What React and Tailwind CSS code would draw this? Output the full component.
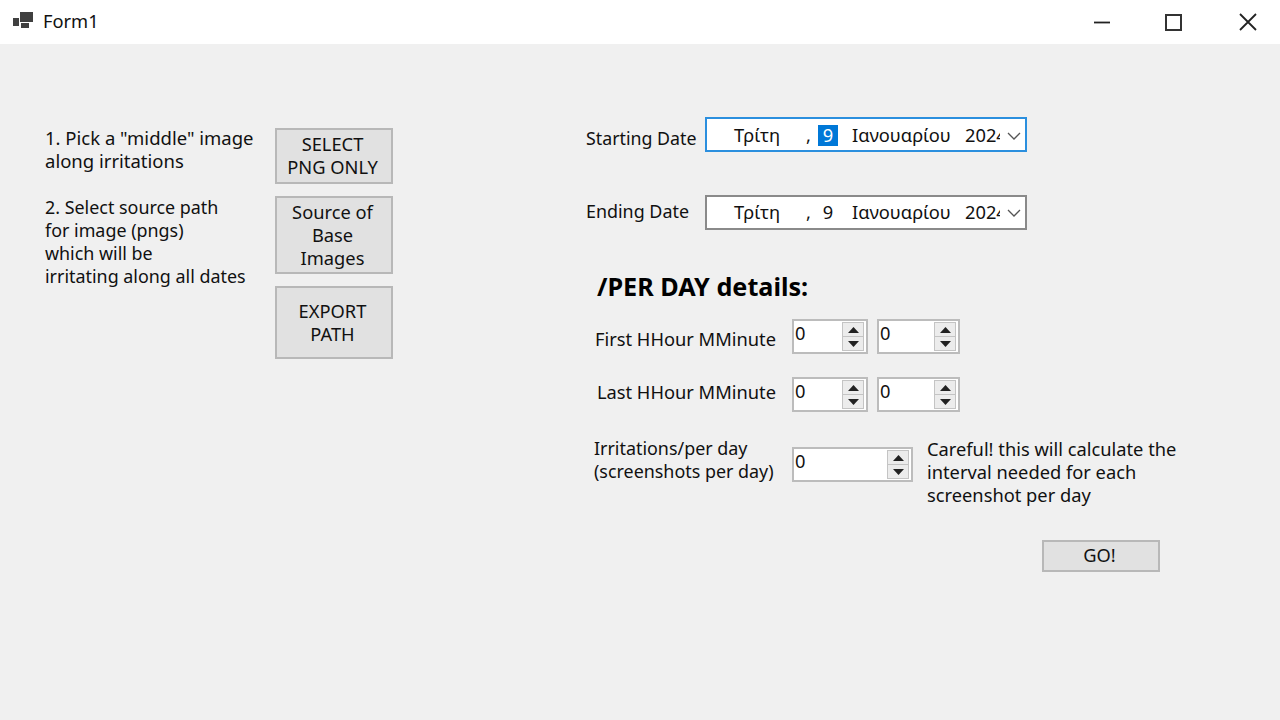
// App.jsx
import { useState } from "react";

function PushButton({ className = "", children }) {
  return (
    <button className={`flex items-center justify-center border-2 border-[#b8b8b8] bg-[#e1e1e1] pr-[3px] text-center leading-[23px] text-[#111] ${className}`}>
      {children}
    </button>
  );
}

function DatePicker({ focused }) {
  return (
    <div
      className={`flex h-[35px] w-[322px] items-center overflow-hidden border-2 bg-white leading-none text-[#111] ${
        focused ? "border-[#2b8fde] pt-[2px]" : "border-[#8a8a8a]"
      }`}
    >
      <span className="ml-[27px] w-[72px]">Τρίτη</span>
      <span className="w-[12px]">,</span>
      <span className={`flex h-[21px] w-[20px] items-center justify-center ${focused ? "bg-[#0078d7] text-white" : ""}`}>9</span>
      <span className="ml-[14px] w-[113px]">Ιανουαρίου</span>
      <span className="w-[35px] overflow-hidden whitespace-nowrap">2024</span>
      <svg className="ml-[6px]" width="16" height="10" viewBox="0 0 16 10" fill="none" stroke="#555" strokeWidth="1.3">
        <path d="M2 2l6 6 6-6" />
      </svg>
    </div>
  );
}

function Spinner({ className = "" }) {
  const [value] = useState(0);
  return (
    <div className={`flex h-[35px] items-stretch border-2 border-[#bcbcbc] bg-white text-[#111] ${className}`}>
      <span className="flex-1 pl-[1px] leading-[23px]">{value}</span>
      <div className="my-[1px] mr-[2px] flex w-[22px] flex-col gap-[1px] bg-[#c4c4c4] p-[1px]">
        <span className="flex flex-1 items-center justify-center bg-[#ececec]">
          <svg width="11" height="6" viewBox="0 0 11 6"><path d="M5.5 0L11 6H0z" fill="#222" /></svg>
        </span>
        <span className="flex flex-1 items-center justify-center bg-[#ececec]">
          <svg width="11" height="6" viewBox="0 0 11 6"><path d="M0 0h11L5.5 6z" fill="#222" /></svg>
        </span>
      </div>
    </div>
  );
}

function App() {
  return (
    <div className="flex h-[720px] w-[1280px] flex-col overflow-hidden bg-[#f0f0f0] font-['Noto_Sans','Open_Sans',sans-serif] text-[18.3px] text-[#111]">
      {/* Title bar */}
      <header className="flex h-[44px] items-center bg-white">
        <svg className="ml-[13px] -translate-y-[2px]" width="20" height="17" viewBox="0 0 20 17" fill="#404040">
          <rect x="0" y="6" width="6" height="8" />
          <rect x="7" y="0" width="13" height="10" />
          <rect x="8" y="11" width="8" height="5" />
        </svg>
        <span className="ml-[10px] -translate-y-[1px]">Form1</span>
        <div className="ml-auto mr-[22px] flex items-center">
          <svg width="20" height="20" viewBox="0 0 20 20" stroke="#222" strokeWidth="1.8" fill="none">
            <path d="M2 10.5h16" />
          </svg>
          <svg className="ml-[51px]" width="20" height="20" viewBox="0 0 20 20" stroke="#333" strokeWidth="2" fill="none">
            <rect x="3" y="3" width="15" height="15" />
          </svg>
          <svg className="ml-[55px]" width="20" height="20" viewBox="0 0 20 20" stroke="#222" strokeWidth="1.8" fill="none">
            <path d="M2 2l16 16M18 2L2 18" />
          </svg>
        </div>
      </header>

      <main className="flex flex-1 items-start">
        {/* Steps */}
        <section className="ml-[45px] w-[230px] pt-[82px] leading-[23px]">
          <p className="text-[18.5px]">
            1. Pick a "middle" image
            <br />
            along irritations
          </p>
          <p className="mt-[24px] text-[17.9px]">
            2. Select source path
            <br />
            for image (pngs)
            <br />
            which will be
            <br />
            irritating along all dates
          </p>
        </section>

        <section className="flex w-[118px] flex-col gap-[12px] pt-[84px]">
          <PushButton className="h-[56px] pb-[3px]">SELECT<br />PNG ONLY</PushButton>
          <PushButton className="h-[78px] pb-[1px]">Source of<br />Base<br />Images</PushButton>
          <PushButton className="h-[73px] pb-[1px]">EXPORT<br />PATH</PushButton>
        </section>

        {/* Dates and per day details */}
        <section className="ml-[193px] w-[600px] pt-[73px]">
          <div className="flex items-start">
            <span className="mt-[8px] w-[119px] text-[17.8px]">Starting Date</span>
            <DatePicker focused />
          </div>
          <div className="mt-[43px] flex items-start">
            <span className="mt-[3px] w-[119px] text-[17.9px]">Ending Date</span>
            <DatePicker />
          </div>

          <h2 className="mt-[41px] ml-[11px] text-[25.2px] leading-[30px] font-bold text-black">/PER DAY details:</h2>

          <div className="mt-[18px] flex items-center">
            <span className="w-[190px] pt-[4px] text-right">First HHour MMinute</span>
            <Spinner className="ml-[16px] w-[76px]" />
            <Spinner className="ml-[9px] w-[83px]" />
          </div>
          <div className="mt-[23px] flex items-center">
            <span className="w-[190px] pb-[6px] text-right">Last HHour MMinute</span>
            <Spinner className="ml-[16px] w-[76px]" />
            <Spinner className="ml-[9px] w-[83px]" />
          </div>

          <div className="mt-[25px] flex items-start leading-[23px]">
            <p className="ml-[8px] w-[198px] whitespace-nowrap text-[17.9px]">
              Irritations/per day
              <br />
              (screenshots per day)
            </p>
            <Spinner className="mt-[10px] w-[121px]" />
            <p className="ml-[14px] whitespace-nowrap">
              Careful! this will calculate the
              <br />
              interval needed for each
              <br />
              screenshot per day
            </p>
          </div>

          <div className="mt-[34px] flex">
            <PushButton className="ml-[456px] h-[32px] w-[118px] pb-[3px]">GO!</PushButton>
          </div>
        </section>
      </main>
    </div>
  );
}

export default App;
